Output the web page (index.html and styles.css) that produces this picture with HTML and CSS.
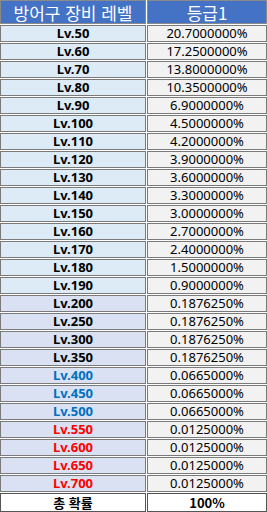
FILE: index.html
```html
<!DOCTYPE html>
<html lang="ko">
<head>
<meta charset="utf-8">
<link rel="stylesheet" href="styles.css">
</head>
<body>
<div class="grid">
  <div class="cell head">방어구 장비 레벨</div><div class="cell head">등급1</div>
  <div class="cell lv a">Lv.50</div><div class="cell pct">20.7000000%</div>
  <div class="cell lv a">Lv.60</div><div class="cell pct">17.2500000%</div>
  <div class="cell lv a">Lv.70</div><div class="cell pct">13.8000000%</div>
  <div class="cell lv a">Lv.80</div><div class="cell pct">10.3500000%</div>
  <div class="cell lv a">Lv.90</div><div class="cell pct">6.9000000%</div>
  <div class="cell lv a">Lv.100</div><div class="cell pct">4.5000000%</div>
  <div class="cell lv a">Lv.110</div><div class="cell pct">4.2000000%</div>
  <div class="cell lv a">Lv.120</div><div class="cell pct">3.9000000%</div>
  <div class="cell lv a">Lv.130</div><div class="cell pct">3.6000000%</div>
  <div class="cell lv a">Lv.140</div><div class="cell pct">3.3000000%</div>
  <div class="cell lv a">Lv.150</div><div class="cell pct">3.0000000%</div>
  <div class="cell lv a">Lv.160</div><div class="cell pct">2.7000000%</div>
  <div class="cell lv a">Lv.170</div><div class="cell pct">2.4000000%</div>
  <div class="cell lv a">Lv.180</div><div class="cell pct">1.5000000%</div>
  <div class="cell lv a">Lv.190</div><div class="cell pct">0.9000000%</div>
  <div class="cell lv b">Lv.200</div><div class="cell pct">0.1876250%</div>
  <div class="cell lv b">Lv.250</div><div class="cell pct">0.1876250%</div>
  <div class="cell lv b">Lv.300</div><div class="cell pct">0.1876250%</div>
  <div class="cell lv b">Lv.350</div><div class="cell pct">0.1876250%</div>
  <div class="cell lv b blue">Lv.400</div><div class="cell pct">0.0665000%</div>
  <div class="cell lv b blue">Lv.450</div><div class="cell pct">0.0665000%</div>
  <div class="cell lv b blue">Lv.500</div><div class="cell pct">0.0665000%</div>
  <div class="cell lv b red">Lv.550</div><div class="cell pct">0.0125000%</div>
  <div class="cell lv b red">Lv.600</div><div class="cell pct">0.0125000%</div>
  <div class="cell lv b red">Lv.650</div><div class="cell pct">0.0125000%</div>
  <div class="cell lv b red">Lv.700</div><div class="cell pct">0.0125000%</div>
  <div class="cell total">총 확률</div><div class="cell total">100%</div>
</div>
</body>
</html>
```
FILE: styles.css
```css
html, body {
  margin: 0;
  padding: 0;
  background: #ffffff;
}
.grid {
  width: 267px;
  display: grid;
  grid-template-columns: 146px 120px;
  grid-template-rows: 24px repeat(26, 17px) 19px;
  gap: 1px;
  background: #ffffff;
  font-family: "Noto Sans", "Noto Sans CJK KR", sans-serif;
}
.cell {
  box-sizing: border-box;
  border: 1px solid #7a7a7a;
  display: flex;
  align-items: center;
  justify-content: center;
  font-size: 13px;
  line-height: 1;
  color: #000000;
  white-space: nowrap;
}
.head {
  background: #4472c4;
  color: #ffffff;
  font-family: "Noto Sans CJK KR", sans-serif;
  font-size: 17px;
  border-color: #8a8a8a;
}
.lv {
  font-weight: bold;
}
.a {
  background: #ddebf7;
}
.b {
  background: #d9e1f2;
}
.pct {
  background: #f2f2f2;
}
.blue {
  color: #0070c0;
}
.red {
  color: #ff0000;
}
.total {
  background: #ffffff;
  font-weight: bold;
  font-family: "Noto Sans CJK KR", "Noto Sans", sans-serif;
  border-color: #555555;
}
```
